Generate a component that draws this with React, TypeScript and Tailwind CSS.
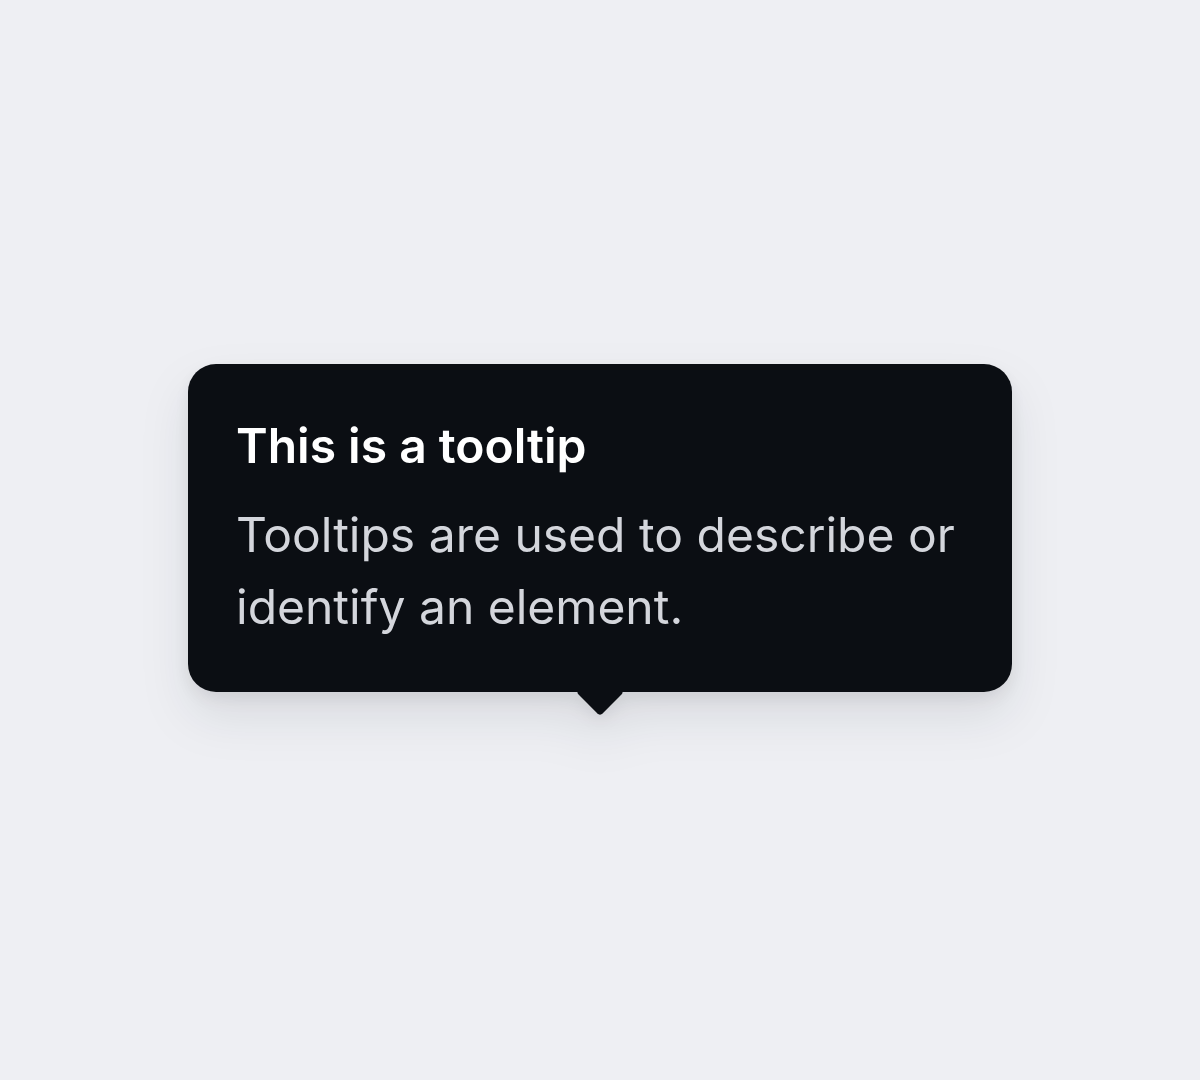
import React from "react";

export default function App() {
  return (
    <div
      className="min-h-screen w-full bg-[#eeeff3] flex items-center justify-center"
      style={{ fontFamily: "Inter, 'Noto Sans', sans-serif" }}
    >
      <div className="flex flex-col items-center [filter:drop-shadow(0_24px_24px_rgba(15,18,30,0.09))_drop-shadow(0_6px_8px_rgba(15,18,30,0.07))]">
        <div className="w-[824px] rounded-[28px] bg-[#0b0e13] px-12 pt-12 pb-[49px]">
          <div className="text-[48px] font-semibold leading-[67px] text-white">
            This is a tooltip
          </div>
          <div className="mt-[20px] text-[48px] font-normal leading-[72px] text-[#d4d6dc]">
            Tooltips are used to describe or identify an element.
          </div>
        </div>
        <div className="relative h-[24px] w-[60px] overflow-hidden">
          <div className="absolute left-1/2 top-[-17px] h-[34px] w-[34px] -translate-x-1/2 rotate-45 rounded-[4px] bg-[#0b0e13]" />
        </div>
      </div>
    </div>
  );
}
